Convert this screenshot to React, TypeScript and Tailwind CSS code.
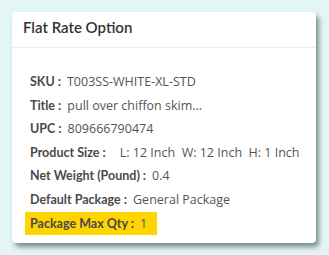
import React from "react";

const rows: { label: string; value: React.ReactNode }[] = [
  { label: "SKU", value: "T003SS-WHITE-XL-STD" },
  { label: "Title", value: "pull over chiffon skim..." },
  { label: "UPC", value: "809666790474" },
  {
    label: "Product Size",
    value: (
      <span className="pl-[8px]">
        L: 12 Inch&nbsp;&nbsp;W: 12 Inch&nbsp;&nbsp;H: 1 Inch
      </span>
    ),
  },
  { label: "Net Weight (Pound)", value: "0.4" },
  { label: "Default Package", value: "General Package" },
];

export default function App() {
  return (
    <div className="w-[329px] h-[255px] bg-[#e4f5f5] pt-3 pl-3 overflow-hidden">
      <div className="w-[304px] h-[231px] bg-white rounded-[4px] shadow-[3px_4px_5px_rgba(40,60,60,0.55)]">
        <div className="h-[36px] pl-[11px] pt-[5px] border-b border-[#eeeeee] font-['Lato',sans-serif] font-semibold text-[15px] text-[#333] leading-[20px]">
          Flat Rate Option
        </div>
        <div className="pt-[25px] pl-[13px] flex flex-col gap-[5.5px] text-[12.5px] leading-[18px]">
          {rows.map((r) => (
            <div key={r.label} className="flex items-baseline px-[5px]">
              <span className="font-['Lato',sans-serif] font-bold text-[#4a4a4a]">{r.label}&nbsp;:</span>
              <span className="ml-[6px] font-['Open_Sans',sans-serif] text-[#555] text-[12.5px]">{r.value}</span>
            </div>
          ))}
          <div className="flex items-baseline self-start bg-[#ffd500] px-[5px] py-[2.5px] pr-[10px] -mt-[2px]">
            <span className="font-['Lato',sans-serif] font-bold text-[#4a4a4a]">Package Max Qty&nbsp;:</span>
            <span className="ml-[6px] font-['Open_Sans',sans-serif] text-[#555] text-[12.5px]">1</span>
          </div>
        </div>
      </div>
    </div>
  );
}
